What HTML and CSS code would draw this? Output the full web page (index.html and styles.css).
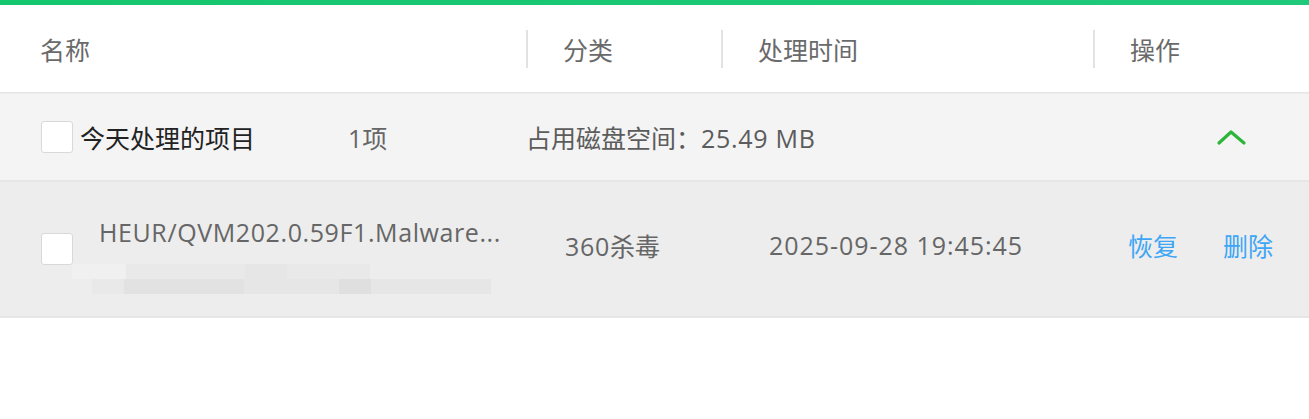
FILE: index.html
```html
<!DOCTYPE html>
<html lang="zh-CN">
<head>
  <meta charset="UTF-8" />
  <title>隔离区</title>
  <link rel="stylesheet" href="styles.css">
</head>
<body>
  <div class="top-bar"></div>

  <!-- 表头 -->
  <div class="table-head">
    <div class="col col-name">名称</div>
    <div class="col col-type"><span class="divider"></span>分类</div>
    <div class="col col-time"><span class="divider"></span>处理时间</div>
    <div class="col col-op"><span class="divider"></span>操作</div>
  </div>

  <!-- 分组行 -->
  <div class="group-row">
    <span class="check"></span>
    <span class="group-title">今天处理的项目</span>
    <span class="group-count">1项</span>
    <span class="group-size">占用磁盘空间：<span class="latin">25.49 MB</span></span>
    <span class="toggle">
      <svg width="32" height="20" viewBox="0 0 32 20">
        <polyline points="3,16 15,5 28,16" fill="none" stroke="#2db539" stroke-width="3.2" stroke-linecap="round" stroke-linejoin="round"/>
      </svg>
    </span>
  </div>

  <!-- 项目行 -->
  <div class="item-row">
    <span class="check"></span>
    <div class="item-name">
      <div class="item-title">HEUR/QVM202.0.59F1.Malware...</div>
      <div class="item-path">
        <div class="path-line path-a"></div>
        <div class="path-line path-b"></div>
      </div>
    </div>
    <span class="item-type"><span class="latin">360</span>杀毒</span>
    <span class="item-time">2025-09-28 19:45:45</span>
    <span class="item-ops">
      <a class="link">恢复</a>
      <a class="link">删除</a>
    </span>
  </div>
</body>
</html>
```

FILE: styles.css
```css
body {
  margin: 0;
  background: #fff;
  font-family: "Open Sans", "Noto Sans CJK SC", sans-serif;
  font-size: 25px;
  color: #666;
}

.latin {
  letter-spacing: 0.7px;
}

.top-bar {
  height: 5px;
  background: linear-gradient(to right, #14c66e, #1fc97a);
}

.table-head {
  display: flex;
  height: 87px;
  align-items: center;
  border-bottom: 1px solid #e6e6e6;
}

.col {
  display: flex;
  align-items: center;
  height: 100%;
  color: #6a6a6a;
}

.col-name {
  width: 486px;
  padding-left: 40px;
}

.col-type { width: 195px; }
.col-time { width: 372px; }
.col-op { flex: 1; }

.divider {
  width: 2px;
  height: 38px;
  background: #e2e2e2;
  margin-right: 35px;
}

.check {
  flex: none;
  width: 30px;
  height: 30px;
  background: #fff;
  border: 1px solid #d9d9d9;
  border-radius: 3px;
}

.group-row {
  display: flex;
  align-items: center;
  height: 86px;
  padding-left: 41px;
  background: #f4f4f4;
  border-top: 1px solid #ececec;
  border-bottom: 2px solid #e6e6e6;
}

.group-title {
  width: 268px;
  margin-left: 7px;
  color: #222;
}

.group-count {
  width: 178px;
}

.group-size {
  flex: 1;
  color: #5c5c5c;
}

.toggle {
  display: flex;
  margin-right: 61px;
}

.item-row {
  display: flex;
  align-items: center;
  height: 134px;
  padding-left: 41px;
  background: #ededed;
  border-bottom: 2px solid #e6e6e6;
}

.item-name {
  width: 492px;
  padding-top: 12px;
}

.item-title {
  margin-left: 26px;
  line-height: 30px;
  margin-bottom: 17px;
  letter-spacing: 0.6px;
}

.item-path {
  height: 30px;
  filter: blur(0.6px);
}

.path-line {
  height: 15px;
}

.path-a {
  width: 298px;
  margin-left: -1px;
  background: linear-gradient(to right, #f0f0f0 0 18%, #e9e9e9 18% 58%, #e6e6e6 58% 72%, #e9e9e9 72% 100%);
}

.path-b {
  width: 399px;
  margin-left: 19px;
  background: linear-gradient(to right, #e9e9e9 0 8%, #e2e2e2 8% 38%, #e6e6e6 38% 62%, #dfdfdf 62% 70%, #e6e6e6 70% 100%);
}

.item-type,
.item-time,
.item-ops {
  margin-bottom: 8px;
}

.item-type {
  width: 204px;
}

.item-time {
  width: 359px;
  letter-spacing: 0.95px;
}

.item-ops {
  display: flex;
  gap: 45px;
}

.link {
  color: #3ea6f5;
  cursor: pointer;
}
```
